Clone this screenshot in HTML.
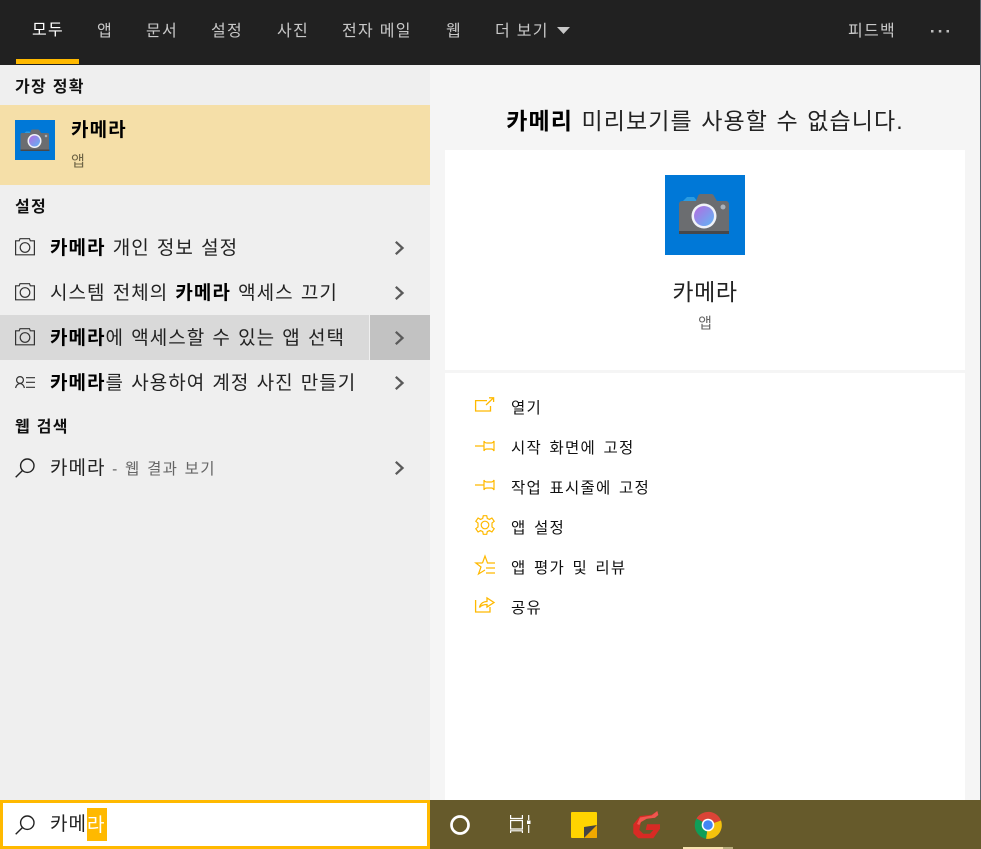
<!DOCTYPE html>
<html lang="ko">
<head>
<meta charset="utf-8">
<style>
html,body{margin:0;padding:0;width:981px;height:849px;overflow:hidden;background:#f5f5f5}
body{position:relative;font-family:"Liberation Sans","Noto Sans CJK KR",sans-serif;color:#000}
.a{position:absolute;white-space:nowrap;line-height:20px}
svg{position:absolute;overflow:visible}
.tab{top:22px;font-size:16px;color:#c8c8c8;letter-spacing:1.3px}
.h{font-size:16px;font-weight:bold;left:15px;color:#111;letter-spacing:1.3px}
.r{left:50px;font-size:19px;color:#222;letter-spacing:1.02px;word-spacing:.9px}
.r b{color:#000}
.act{left:511px;font-size:15.500px;color:#111;letter-spacing:1.250px;word-spacing:1.900px}
</style>
</head>
<body>
<!-- top bar -->
<div class="a" style="left:0;top:0;width:980px;height:65px;background:#212121"></div>
<div class="a" style="left:16px;top:59px;width:63px;height:5px;background:#ffb900"></div>
<div class="a tab" style="left:32px;top:21px;color:#fff">모두</div>
<div class="a tab" style="left:97px">앱</div>
<div class="a tab" style="left:146px">문서</div>
<div class="a tab" style="left:211px">설정</div>
<div class="a tab" style="left:277px">사진</div>
<div class="a tab" style="left:342px">전자 메일</div>
<div class="a tab" style="left:446px">웹</div>
<div class="a tab" style="left:495px">더 보기</div>
<svg style="left:557px;top:27px" width="14" height="8"><path d="M0 0H13L6.5 7Z" fill="#c8c8c8"/></svg>
<div class="a tab" style="left:848px">피드백</div>
<svg style="left:930px;top:29px" width="20" height="4"><g fill="#bbb"><rect x="1" y="1" width="2.500" height="2.500"/><rect x="8.800" y="1" width="2.500" height="2.500"/><rect x="16.500" y="1" width="2.500" height="2.500"/></g></svg>

<!-- left pane -->
<div class="a" style="left:0;top:65px;width:430px;height:735px;background:#efefef"></div>
<div class="a h" style="top:78px">가장 정확</div>
<div class="a" style="left:0;top:105px;width:430px;height:80px;background:#f5dfa8"></div>
<div class="a" style="left:15px;top:120px;width:40px;height:40px;background:#0078d7"></div>
<svg style="left:15px;top:120px" width="40" height="40" viewBox="0 0 80 80">
<path d="M18 27l4-4h7l3 4z" fill="#2b9be0"/>
<path d="M11 29a3 3 0 0 1 3-3h16l2-5a3 3 0 0 1 3-2h11a3 3 0 0 1 3 2l3 5h13a3 3 0 0 1 3 3v30H11z" fill="#6b6d70"/>
<rect x="11" y="59" width="58" height="3" fill="#46484b"/>
<circle cx="39" cy="42" r="14" fill="#f0f2f8"/>
<defs><linearGradient id="g1" x1="0" y1="0" x2="1" y2="1"><stop offset="0" stop-color="#b56be0"/><stop offset="1" stop-color="#5fb6f5"/></linearGradient></defs>
<circle cx="39" cy="42" r="11" fill="url(#g1)"/>
<circle cx="62" cy="32" r="2.500" fill="#aab2bb"/>
</svg>
<div class="a" style="left:71px;top:121px;font-size:19px;font-weight:bold;letter-spacing:1.1px">카메라</div>
<div class="a" style="left:71px;top:152px;font-size:15px;color:#6e6445">앱</div>
<div class="a h" style="top:198px">설정</div>

<div class="a" style="left:0;top:315px;width:369px;height:45px;background:#d9d9d9"></div>
<div class="a" style="left:370px;top:315px;width:60px;height:45px;background:#c2c2c2"></div>

<svg style="left:15px;top:238px" width="20" height="18" fill="none" stroke="#333" stroke-width="1.200"><path d="M.6 2.800H4.200L5 .7H14.500L15.300 2.800H19.400V16.800H.6Z"/><circle cx="10" cy="9.500" r="4.800"/></svg>
<div class="a r" style="top:239px"><b>카메라</b> 개인 정보 설정</div>
<svg style="left:15px;top:283px" width="20" height="18" fill="none" stroke="#333" stroke-width="1.200"><path d="M.6 2.800H4.200L5 .7H14.500L15.300 2.800H19.400V16.800H.6Z"/><circle cx="10" cy="9.500" r="4.800"/></svg>
<div class="a r" style="top:284px">시스템 전체의 <b>카메라</b> 액세스 끄기</div>
<svg style="left:15px;top:328px" width="20" height="18" fill="none" stroke="#333" stroke-width="1.200"><path d="M.6 2.800H4.200L5 .7H14.500L15.300 2.800H19.400V16.800H.6Z"/><circle cx="10" cy="9.500" r="4.800"/></svg>
<div class="a r" style="top:329px"><b>카메라</b>에 액세스할 수 있는 앱 선택</div>
<svg style="left:15px;top:375px" width="21" height="14" fill="none" stroke="#333" stroke-width="1.200"><circle cx="5" cy="5" r="3.400"/><path d="M.6 13C1 10.500 3 8.500 5 8.500S9 10.500 9.400 13M11 2.700H20M11 7.300H20M11 12.300H20"/></svg>
<div class="a r" style="top:374px"><b>카메라</b>를 사용하여 계정 사진 만들기</div>
<div class="a h" style="top:418px">웹 검색</div>
<svg style="left:15px;top:458px" width="21" height="20" fill="none" stroke="#222" stroke-width="1.400"><circle cx="12.300" cy="7.700" r="6.700"/><path d="M7.500 12.500L.7 19.300"/></svg>
<div class="a r" style="top:459px">카메라<span style="font-size:15.500px;color:#666;letter-spacing:1.250px;word-spacing:1px"> - 웹 결과 보기</span></div>

<svg style="left:394px;top:241px" width="11" height="14" fill="none" stroke="#5a5a5a" stroke-width="2.300"><path d="M1.800 .8L8.500 7L1.800 13.200"/></svg>
<svg style="left:394px;top:286px" width="11" height="14" fill="none" stroke="#5a5a5a" stroke-width="2.300"><path d="M1.800 .8L8.500 7L1.800 13.200"/></svg>
<svg style="left:394px;top:331px" width="11" height="14" fill="none" stroke="#5a5a5a" stroke-width="2.300"><path d="M1.800 .8L8.500 7L1.800 13.200"/></svg>
<svg style="left:394px;top:376px" width="11" height="14" fill="none" stroke="#5a5a5a" stroke-width="2.300"><path d="M1.800 .8L8.500 7L1.800 13.200"/></svg>
<svg style="left:394px;top:461px" width="11" height="14" fill="none" stroke="#5a5a5a" stroke-width="2.300"><path d="M1.800 .8L8.500 7L1.800 13.200"/></svg>

<!-- right pane -->
<div class="a" style="left:430px;top:65px;width:550px;height:735px;background:#f5f5f5"></div>
<div class="a" style="left:430px;width:550px;top:108px;line-height:26px;text-align:center;font-size:23px;color:#222;letter-spacing:1.100px;word-spacing:1px"><b style="color:#000">카메리</b> 미리보기를 사용할 수 없습니다.</div>
<div class="a" style="left:445px;top:150px;width:520px;height:220px;background:#fff"></div>
<div class="a" style="left:445px;top:373px;width:520px;height:427px;background:#fff"></div>
<div class="a" style="left:665px;top:175px;width:80px;height:80px;background:#0078d7"></div>
<svg style="left:665px;top:175px" width="80" height="80" viewBox="0 0 80 80">
<path d="M18 26l4-4h7l3 4z" fill="#2b9be0"/>
<path d="M14 29a3 3 0 0 1 3-3h14l2-5a3 3 0 0 1 3-2h10a3 3 0 0 1 3 2l3 5h9a3 3 0 0 1 3 3v28H14z" fill="#6b6d70"/>
<rect x="14" y="56" width="50" height="3" fill="#46484b"/>
<circle cx="39" cy="41" r="12.500" fill="#f0f2f8"/>
<defs><linearGradient id="g2" x1="0" y1="0" x2="1" y2="1"><stop offset="0" stop-color="#b56be0"/><stop offset="1" stop-color="#5fb6f5"/></linearGradient></defs>
<circle cx="39" cy="41" r="10" fill="url(#g2)"/>
<circle cx="58" cy="32" r="2.500" fill="#aab2bb"/>
</svg>
<div class="a" style="left:445px;width:520px;top:279px;line-height:26px;text-align:center;font-size:23px;color:#222;letter-spacing:.6px">카메라</div>
<div class="a" style="left:445px;width:520px;top:314px;text-align:center;font-size:15px;color:#666">앱</div>

<!-- actions -->
<svg style="left:475px;top:397px" width="20" height="15" fill="none" stroke="#ffb900" stroke-width="1.300"><path d="M12 3.600H.6V14H15.500V9M11 8L18.500 .8M14 .8H18.600V5"/></svg>
<div class="a act" style="top:399px">열기</div>
<svg style="left:475px;top:439px" width="20" height="14" fill="none" stroke="#ffb900" stroke-width="1.200"><path d="M0 7H9M9 2C9.500 4 11 4 12 4H16.500C17.500 4 18.500 3 19 2V12C18.500 11 17.500 10 16.500 10H12C11 10 9.500 10 9 12Z"/></svg>
<div class="a act" style="top:439px">시작 화면에 고정</div>
<svg style="left:475px;top:478px" width="20" height="14" fill="none" stroke="#ffb900" stroke-width="1.200"><path d="M0 7H9M9 2C9.500 4 11 4 12 4H16.500C17.500 4 18.500 3 19 2V12C18.500 11 17.500 10 16.500 10H12C11 10 9.500 10 9 12Z"/></svg>
<div class="a act" style="top:479px">작업 표시줄에 고정</div>
<svg style="left:475px;top:515px" width="20" height="20" fill="none" stroke="#ffb900" stroke-width="1.200"><circle cx="10" cy="10" r="3.800"/><path d="M8.300 .7H11.700L12.300 3.400L14.500 4.400L16.900 3L19.200 6.300L17 8L17 12L19.200 13.700L16.900 17L14.500 15.600L12.300 16.600L11.700 19.300H8.300L7.700 16.600L5.500 15.600L3.100 17L.8 13.700L3 12L3 8L.8 6.300L3.100 3L5.500 4.400L7.700 3.400Z"/></svg>
<div class="a act" style="top:519px">앱 설정</div>
<svg style="left:475px;top:555px" width="21" height="20" fill="none" stroke="#ffb900" stroke-width="1.200"><path d="M7.500 8L10 1L12.500 8H20M7.500 8H.8L6 12L3.500 19L10 15M11 13H20M11 18H20"/></svg>
<div class="a act" style="top:559px">앱 평가 및 리뷰</div>
<svg style="left:475px;top:595px" width="20" height="18" fill="none" stroke="#ffb900" stroke-width="1.300"><path d="M.6 5V17H15V12M4.500 12.500C5.500 8 9 6.500 12 6.500V3L19 7.500L12 12V9.500C9.500 9.500 6.500 10 4.500 12.500Z"/></svg>
<div class="a act" style="top:599px">공유</div>

<!-- search box -->
<div class="a" style="left:0;top:800px;width:424px;height:43px;background:#fff;border:3px solid #ffb900"></div>
<svg style="left:15px;top:815px" width="21" height="20" fill="none" stroke="#222" stroke-width="1.400"><circle cx="12.300" cy="7.700" r="6.700"/><path d="M7.500 12.500L.7 19.300"/></svg>
<div class="a" style="left:50px;top:815px;font-size:19px;color:#222;letter-spacing:1px">카메</div>
<div class="a" style="left:87px;top:808px;width:20px;height:33px;background:#ffb900;color:#fff;font-size:19px;line-height:35px">라</div>

<!-- taskbar -->
<div class="a" style="left:430px;top:800px;width:551px;height:49px;background:#665a2b"></div>
<svg style="left:450px;top:815px" width="20" height="20" fill="none" stroke="#fff" stroke-width="2.700"><circle cx="10" cy="10" r="8.500"/></svg>
<svg style="left:510px;top:815px" width="21" height="19" fill="none" stroke="#fff" stroke-width="1.200"><path d="M.6 0V3.500H12.400V0M.6 5.500H12.400V14H.6ZM.6 18V15.800H12.400V18M18.700 0V5M18.700 10V18"/><rect x="17" y="5.500" width="3.500" height="3.500" fill="#fff" stroke="none"/></svg>
<div class="a" style="left:571px;top:812px;width:26px;height:26px;background:#ffd400;border-radius:1px"></div>
<svg style="left:571px;top:812px" width="27" height="27"><path d="M13 26L26 13V25a1 1 0 0 1-1 1Z" fill="#f0a800"/><path d="M13 26V15L26 13Z" fill="#444"/></svg>
<svg style="left:632px;top:811px" width="29" height="28"><path d="M25.300 0L26.300 4L23 6.700L14.700 7.700L9 11L7.300 19L11.300 22.700H18L21.300 19H13.700L15 13.300H28V17.700L21.300 27.300H6.300L1.300 22.300V13.300L8 5L19.700 3.700Z" fill="#d82a24"/><path d="M25.300 0L26.300 4L23 6.700L14.700 7.700L9 11L7.300 14L5 13L8 6.500L19.700 4.500Z" fill="#f0564f"/></svg>
<svg style="left:694px;top:811px" width="28" height="28" viewBox="0 0 28 28">
<path d="M14 14L2.500 7.500A13.700 13.700 0 0 1 27 9.500Z" fill="#db4437"/>
<path d="M14 14L27 9.500A13.700 13.700 0 0 1 12 27.700Z" fill="#f4c20d"/>
<path d="M14 14L12 27.700A13.700 13.700 0 0 1 2.500 7.500Z" fill="#0f9d58"/>
<circle cx="14" cy="14" r="6.300" fill="#fff"/><circle cx="14" cy="14" r="4.800" fill="#4285f4"/>
</svg>
<div class="a" style="left:683px;top:847px;width:40px;height:2px;background:#f5e3ae"></div>
<div class="a" style="left:723px;top:847px;width:10px;height:2px;background:#b8ad7c"></div>

<!-- right edge -->
<div class="a" style="left:980px;top:0;width:1px;height:800px;background:#5d6670"></div>
</body>
</html>
